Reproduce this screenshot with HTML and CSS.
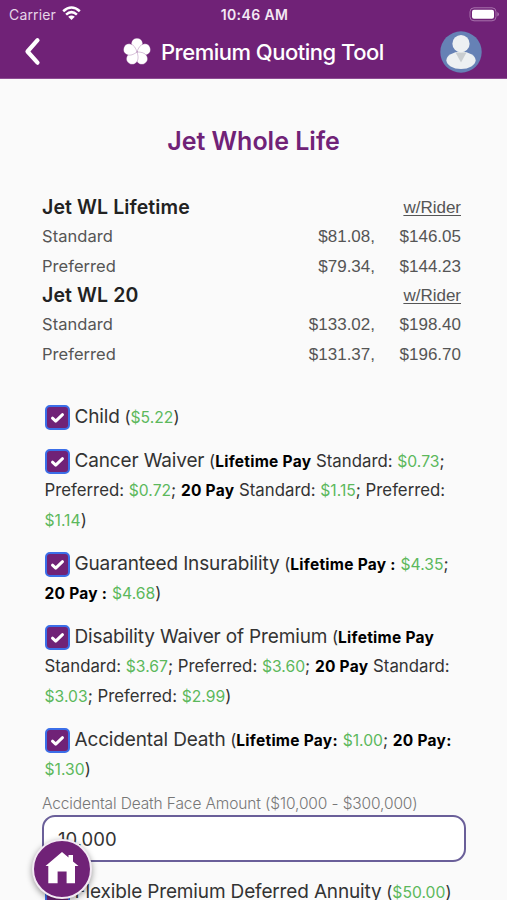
FILE: index.html
```html
<!DOCTYPE html>
<html lang="en">
<head>
<meta charset="utf-8">
<title>Premium Quoting Tool</title>
<link rel="stylesheet" href="styles.css">
</head>
<body>
<svg width="0" height="0" class="defs" aria-hidden="true">
  <symbol id="check" viewBox="1.5 1.5 21 21"><path d="M7 12.700 10.200 15.600 17 9.200" fill="none" stroke="#fff" stroke-width="3" stroke-linecap="round" stroke-linejoin="round"/></symbol>
</svg>
<header class="top">
  <div class="status">
    <div class="carrier"><span>Carrier</span>
      <svg width="19" height="15" viewBox="0 0 19 15" fill="none" stroke="#fff" stroke-width="2.6"><path d="M1.2 5.2Q9.5-2.2 17.8 5.2"/><path d="M4.1 8.6Q9.5 3.8 14.9 8.6"/><path d="M9.5 14 6.2 10.8Q9.5 8 12.8 10.8Z" fill="#fff" stroke="none"/></svg>
    </div>
    <div class="clock">10:46 AM</div>
    <svg class="battery" width="31" height="15" viewBox="0 0 31 15"><rect x="1" y=".8" width="26" height="13" rx="4" fill="none" stroke="#a873ad"/><rect x="3" y="2.8" width="22" height="9" rx="2" fill="#fff"/><path d="M28.3 5v4.5q1.7-.8 1.7-2.2T28.3 5Z" fill="#a873ad"/></svg>
  </div>
  <div class="nav">
    <svg class="back" width="18" height="30" viewBox="0 0 18 30"><path d="M13.5 3.2 3.5 14.500 13.5 25.700" fill="none" stroke="#fff" stroke-width="4.2" stroke-linecap="round" stroke-linejoin="round"/></svg>
    <div class="brand">
      <svg width="30" height="30" viewBox="-15 -15 30 30">
        <g fill="#fff" stroke="#702277" stroke-width=".25">
          <path id="petal" d="M0 0C-3.500-2.500-5.900-5.2-5.600-8.9-5.200-12.200-2.8-13.8 0-13.8S5.200-12.200 5.600-8.9C5.900-5.200 3.500-2.500 0 0Z"/>
          <use href="#petal" transform="rotate(72)"/><use href="#petal" transform="rotate(144)"/><use href="#petal" transform="rotate(216)"/><use href="#petal" transform="rotate(288)"/>
        </g>
      </svg>
      <span>Premium Quoting Tool</span>
    </div>
    <svg class="avatar" width="42" height="42" viewBox="0 0 42 42"><circle cx="21" cy="21" r="20.7" fill="#6681b5"/><ellipse cx="21" cy="29.3" rx="14.6" ry="8.7" fill="#edf0f2"/><path d="M15.500 21.500H26.500L21 31.500Z" fill="#c9cdd0"/><circle cx="21" cy="12.700" r="8.600" fill="#edf0f2"/></svg>
  </div>
</header>
<main>
  <h1><span>Jet Whole Life</span></h1>
  <section class="rates">
    <div class="rate"><h2>Jet WL Lifetime</h2><u>w/Rider</u></div>
    <div class="rate"><span class="tier">Standard</span><span class="sum">$81.08,</span><span class="sum rider">$146.05</span></div>
    <div class="rate"><span class="tier">Preferred</span><span class="sum">$79.34,</span><span class="sum rider">$144.23</span></div>
    <div class="rate"><h2>Jet WL 20</h2><u>w/Rider</u></div>
    <div class="rate"><span class="tier">Standard</span><span class="sum">$133.02,</span><span class="sum rider">$198.40</span></div>
    <div class="rate"><span class="tier">Preferred</span><span class="sum">$131.37,</span><span class="sum rider">$196.70</span></div>
  </section>
  <section class="options">
    <div class="option">
      <div class="line"><svg class="box"><use href="#check"/></svg><span class="name">Child</span> (<i>$5.22</i>)</div>
    </div>
    <div class="option">
      <div class="line"><svg class="box"><use href="#check"/></svg><span class="name">Cancer Waiver</span> (<b>Lifetime Pay</b> Standard: <i>$0.73</i>;</div>
      <div class="line">Preferred: <i>$0.72</i>; <b>20 Pay</b> Standard: <i>$1.15</i>; Preferred:</div>
      <div class="line"><i>$1.14</i>)</div>
    </div>
    <div class="option">
      <div class="line"><svg class="box"><use href="#check"/></svg><span class="name">Guaranteed Insurability</span> (<b>Lifetime Pay :</b> <i>$4.35</i>;</div>
      <div class="line"><b>20 Pay :</b> <i>$4.68</i>)</div>
    </div>
    <div class="option">
      <div class="line"><svg class="box"><use href="#check"/></svg><span class="name">Disability Waiver of Premium</span> (<b>Lifetime Pay</b></div>
      <div class="line">Standard: <i>$3.67</i>; Preferred: <i>$3.60</i>; <b>20 Pay</b> Standard:</div>
      <div class="line"><i>$3.03</i>; Preferred: <i>$2.99</i>)</div>
    </div>
    <div class="option last">
      <div class="line"><svg class="box"><use href="#check"/></svg><span class="name">Accidental Death</span> (<b>Lifetime Pay:</b> <i>$1.00</i>; <b>20 Pay:</b></div>
      <div class="line"><i>$1.30</i>)</div>
    </div>
    <label class="face" for="face">Accidental Death Face Amount ($10,000 - $300,000)</label>
    <input id="face" value="10,000">
    <div class="option annuity">
      <div class="line"><svg class="box"><use href="#check"/></svg><span class="name">Flexible Premium Deferred Annuity</span> (<i>$50.00</i>)</div>
    </div>
  </section>
</main>
<div class="home"><svg width="34" height="34" viewBox="0 0 34 34"><path d="M17 1 23.500 6.500V4H28V10.500L33.500 15H30V32.300H21.600V20.500H12.600V32.300H3.300V15H.500Z" fill="#fff"/></svg></div>
</body>
</html>
```
FILE: styles.css
```css
* { box-sizing: border-box; }
body { margin: 0; height: 900px; overflow: hidden; background: #fafafa; font-family: Inter, "Liberation Sans", sans-serif; color: #333; white-space: nowrap; }
.defs { position: absolute; }
.top { height: 79px; background: #702277; border-bottom: 1px solid #8d4d93; color: #fff; }
.status { height: 27px; display: grid; grid-template-columns: 1fr auto 1fr; align-items: center; padding: 1px 7px 0 9px; font-size: 14px; }
.carrier { display: flex; align-items: center; gap: 6px; letter-spacing: .15px; color: #e6d5e8; }
.carrier svg { margin-top: -2px; }
.clock { font-weight: 600; font-size: 14px; color: #f3e8f4; letter-spacing: .4px; }
.battery { justify-self: end; }
.nav { height: 51px; display: flex; align-items: center; padding: 0 25px 1px 24px; }
.brand { display: flex; align-items: center; gap: 9px; margin: 0 auto 0 80px; font-size: 22px; font-weight: 500; letter-spacing: -.5px; }
h1 { margin: 0; height: 113px; padding: 45px 0 0; text-align: center; font-size: 25px; line-height: 34px; font-weight: 600; color: #702277; }
.rates { padding: 0 46px 0 42px; font-family: "Liberation Sans", sans-serif; font-size: 17px; color: #555; }
.rate { display: flex; height: 29.330px; line-height: 29.330px; }
h2 { margin: 0; flex: 1; font: 600 19.500px/30px Inter, sans-serif; letter-spacing: .1px; color: #222; }
u { padding-top: 1px; text-underline-offset: 2px; }
.tier { flex: 1; font-family: Inter, sans-serif; font-size: 16.500px; letter-spacing: .05px; padding-top: 1px; }
.sum { padding-top: 1px; }
.rider { width: 86px; text-align: right; }
.options { padding: 34px 42px 0; }
.option { margin: 0 0 14.670px 2.500px; font-size: 16.800px; }
.line { height: 29.330px; line-height: 29.330px; }
.line + .line { position: relative; top: 1px; }
.name { font-size: 19px; letter-spacing: -.15px; }
.box { width: 25px; height: 25px; margin-right: 5px; vertical-align: -7.500px; background: #702277; border: 2px solid #3b6ee8; border-radius: 5px; }
b { font-weight: 700; font-size: 15.500px; letter-spacing: .27px; color: #000; }
i { font-style: normal; font-size: 15.700px; color: #5cb85c; }
.last { margin-bottom: 0; }
.face { display: block; height: 31.500px; line-height: 42px; font-size: 15.500px; font-weight: 300; letter-spacing: -.12px; color: #777; }
input { display: block; width: 424px; height: 47px; border: 2px solid #6a5f99; border-radius: 13px; background: #fff; padding: 2px 14px 0; font: 18.500px Inter, sans-serif; color: #333; }
.annuity { margin-top: 15px; }
.home { position: absolute; left: 32px; top: 839px; width: 60px; height: 60px; border: 2px solid #f2e9f3; border-radius: 50%; background: #702277; display: flex; align-items: center; justify-content: center; box-shadow: 0 2px 6px #0006; padding-bottom: 3px; }
```
